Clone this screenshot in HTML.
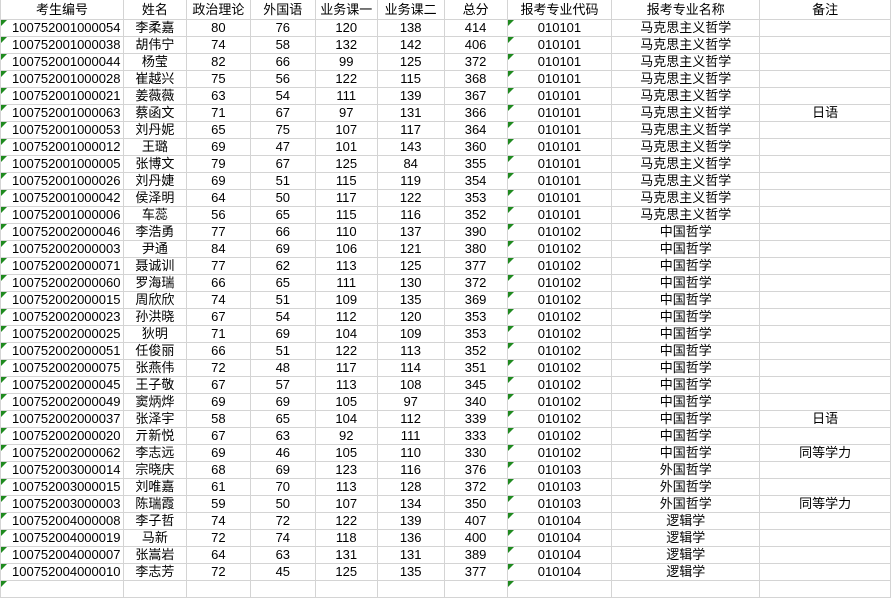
<!DOCTYPE html>
<html><head><meta charset="utf-8"><style>
body{margin:0;width:891px;height:583px;overflow:hidden;background:#fff;font-family:"Liberation Sans","Noto Sans CJK SC",sans-serif;font-size:13px;color:#000}
table{border-collapse:collapse;table-layout:fixed;position:absolute;left:0;top:-1px}
td{border:1px solid #d4d4d4;height:16px;padding:0;text-align:center;line-height:16px;white-space:nowrap;overflow:hidden;position:relative}
tr.h td{height:19px;line-height:19px}
td.a{text-align:left;padding-left:11px}
td.g::before{content:"";position:absolute;left:0;top:0;border-top:6px solid #1f8a1f;border-right:6px solid transparent}
</style></head><body>
<table>
<colgroup><col style="width:123px"><col style="width:63px"><col style="width:64px"><col style="width:65px"><col style="width:62px"><col style="width:67px"><col style="width:63px"><col style="width:105px"><col style="width:148px"><col style="width:131px"></colgroup>
<tr class="h"><td>考生编号</td><td>姓名</td><td>政治理论</td><td>外国语</td><td>业务课一</td><td>业务课二</td><td>总分</td><td>报考专业代码</td><td>报考专业名称</td><td>备注</td></tr>
<tr><td class="a g">100752001000054</td><td>李柔嘉</td><td>80</td><td>76</td><td>120</td><td>138</td><td>414</td><td class="g">010101</td><td>马克思主义哲学</td><td></td></tr>
<tr><td class="a g">100752001000038</td><td>胡伟宁</td><td>74</td><td>58</td><td>132</td><td>142</td><td>406</td><td class="g">010101</td><td>马克思主义哲学</td><td></td></tr>
<tr><td class="a g">100752001000044</td><td>杨莹</td><td>82</td><td>66</td><td>99</td><td>125</td><td>372</td><td class="g">010101</td><td>马克思主义哲学</td><td></td></tr>
<tr><td class="a g">100752001000028</td><td>崔越兴</td><td>75</td><td>56</td><td>122</td><td>115</td><td>368</td><td class="g">010101</td><td>马克思主义哲学</td><td></td></tr>
<tr><td class="a g">100752001000021</td><td>姜薇薇</td><td>63</td><td>54</td><td>111</td><td>139</td><td>367</td><td class="g">010101</td><td>马克思主义哲学</td><td></td></tr>
<tr><td class="a g">100752001000063</td><td>蔡函文</td><td>71</td><td>67</td><td>97</td><td>131</td><td>366</td><td class="g">010101</td><td>马克思主义哲学</td><td>日语</td></tr>
<tr><td class="a g">100752001000053</td><td>刘丹妮</td><td>65</td><td>75</td><td>107</td><td>117</td><td>364</td><td class="g">010101</td><td>马克思主义哲学</td><td></td></tr>
<tr><td class="a g">100752001000012</td><td>王璐</td><td>69</td><td>47</td><td>101</td><td>143</td><td>360</td><td class="g">010101</td><td>马克思主义哲学</td><td></td></tr>
<tr><td class="a g">100752001000005</td><td>张博文</td><td>79</td><td>67</td><td>125</td><td>84</td><td>355</td><td class="g">010101</td><td>马克思主义哲学</td><td></td></tr>
<tr><td class="a g">100752001000026</td><td>刘丹婕</td><td>69</td><td>51</td><td>115</td><td>119</td><td>354</td><td class="g">010101</td><td>马克思主义哲学</td><td></td></tr>
<tr><td class="a g">100752001000042</td><td>侯泽明</td><td>64</td><td>50</td><td>117</td><td>122</td><td>353</td><td class="g">010101</td><td>马克思主义哲学</td><td></td></tr>
<tr><td class="a g">100752001000006</td><td>车蕊</td><td>56</td><td>65</td><td>115</td><td>116</td><td>352</td><td class="g">010101</td><td>马克思主义哲学</td><td></td></tr>
<tr><td class="a g">100752002000046</td><td>李浩勇</td><td>77</td><td>66</td><td>110</td><td>137</td><td>390</td><td class="g">010102</td><td>中国哲学</td><td></td></tr>
<tr><td class="a g">100752002000003</td><td>尹通</td><td>84</td><td>69</td><td>106</td><td>121</td><td>380</td><td class="g">010102</td><td>中国哲学</td><td></td></tr>
<tr><td class="a g">100752002000071</td><td>聂诚训</td><td>77</td><td>62</td><td>113</td><td>125</td><td>377</td><td class="g">010102</td><td>中国哲学</td><td></td></tr>
<tr><td class="a g">100752002000060</td><td>罗海瑞</td><td>66</td><td>65</td><td>111</td><td>130</td><td>372</td><td class="g">010102</td><td>中国哲学</td><td></td></tr>
<tr><td class="a g">100752002000015</td><td>周欣欣</td><td>74</td><td>51</td><td>109</td><td>135</td><td>369</td><td class="g">010102</td><td>中国哲学</td><td></td></tr>
<tr><td class="a g">100752002000023</td><td>孙洪晓</td><td>67</td><td>54</td><td>112</td><td>120</td><td>353</td><td class="g">010102</td><td>中国哲学</td><td></td></tr>
<tr><td class="a g">100752002000025</td><td>狄明</td><td>71</td><td>69</td><td>104</td><td>109</td><td>353</td><td class="g">010102</td><td>中国哲学</td><td></td></tr>
<tr><td class="a g">100752002000051</td><td>任俊丽</td><td>66</td><td>51</td><td>122</td><td>113</td><td>352</td><td class="g">010102</td><td>中国哲学</td><td></td></tr>
<tr><td class="a g">100752002000075</td><td>张燕伟</td><td>72</td><td>48</td><td>117</td><td>114</td><td>351</td><td class="g">010102</td><td>中国哲学</td><td></td></tr>
<tr><td class="a g">100752002000045</td><td>王子敬</td><td>67</td><td>57</td><td>113</td><td>108</td><td>345</td><td class="g">010102</td><td>中国哲学</td><td></td></tr>
<tr><td class="a g">100752002000049</td><td>窦炳烨</td><td>69</td><td>69</td><td>105</td><td>97</td><td>340</td><td class="g">010102</td><td>中国哲学</td><td></td></tr>
<tr><td class="a g">100752002000037</td><td>张泽宇</td><td>58</td><td>65</td><td>104</td><td>112</td><td>339</td><td class="g">010102</td><td>中国哲学</td><td>日语</td></tr>
<tr><td class="a g">100752002000020</td><td>亓新悦</td><td>67</td><td>63</td><td>92</td><td>111</td><td>333</td><td class="g">010102</td><td>中国哲学</td><td></td></tr>
<tr><td class="a g">100752002000062</td><td>李志远</td><td>69</td><td>46</td><td>105</td><td>110</td><td>330</td><td class="g">010102</td><td>中国哲学</td><td>同等学力</td></tr>
<tr><td class="a g">100752003000014</td><td>宗晓庆</td><td>68</td><td>69</td><td>123</td><td>116</td><td>376</td><td class="g">010103</td><td>外国哲学</td><td></td></tr>
<tr><td class="a g">100752003000015</td><td>刘唯嘉</td><td>61</td><td>70</td><td>113</td><td>128</td><td>372</td><td class="g">010103</td><td>外国哲学</td><td></td></tr>
<tr><td class="a g">100752003000003</td><td>陈瑞霞</td><td>59</td><td>50</td><td>107</td><td>134</td><td>350</td><td class="g">010103</td><td>外国哲学</td><td>同等学力</td></tr>
<tr><td class="a g">100752004000008</td><td>李子哲</td><td>74</td><td>72</td><td>122</td><td>139</td><td>407</td><td class="g">010104</td><td>逻辑学</td><td></td></tr>
<tr><td class="a g">100752004000019</td><td>马新</td><td>72</td><td>74</td><td>118</td><td>136</td><td>400</td><td class="g">010104</td><td>逻辑学</td><td></td></tr>
<tr><td class="a g">100752004000007</td><td>张嵩岩</td><td>64</td><td>63</td><td>131</td><td>131</td><td>389</td><td class="g">010104</td><td>逻辑学</td><td></td></tr>
<tr><td class="a g">100752004000010</td><td>李志芳</td><td>72</td><td>45</td><td>125</td><td>135</td><td>377</td><td class="g">010104</td><td>逻辑学</td><td></td></tr>
<tr><td class="a g"></td><td></td><td></td><td></td><td></td><td></td><td></td><td class="g"></td><td></td><td></td></tr>
</table>
</body></html>
